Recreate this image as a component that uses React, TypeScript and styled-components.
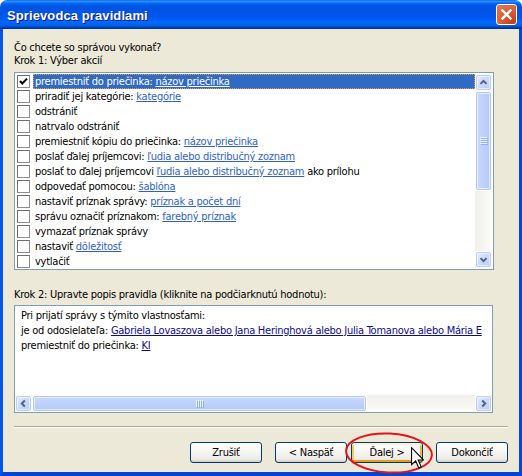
import React from "react";
import styled, {createGlobalStyle} from "styled-components";

const UI_FONT = `"DejaVu Sans Condensed", "Liberation Sans", sans-serif`

const GlobalStyle = createGlobalStyle`
  html, body {
    margin: 0;
    padding: 0;
    background: #ffffff;
  }
  body {
    font-family: ${UI_FONT};
    font-size: 11px;
    letter-spacing: -0.25px;
  }
`

type Part = { text: string, link?: boolean }
type Action = { parts: Part[], checked?: boolean, selected?: boolean }

const actions: Action[] = [
    {parts: [{text: "premiestniť do priečinka: "}, {text: "názov priečinka", link: true}], checked: true, selected: true},
    {parts: [{text: "priradiť jej kategórie: "}, {text: "kategórie", link: true}]},
    {parts: [{text: "odstrániť"}]},
    {parts: [{text: "natrvalo odstrániť"}]},
    {parts: [{text: "premiestniť kópiu do priečinka: "}, {text: "názov priečinka", link: true}]},
    {parts: [{text: "poslať ďalej príjemcovi: "}, {text: "ľudia alebo distribučný zoznam", link: true}]},
    {parts: [{text: "poslať to ďalej príjemcovi "}, {text: "ľudia alebo distribučný zoznam", link: true}, {text: " ako prílohu"}]},
    {parts: [{text: "odpovedať pomocou: "}, {text: "šablóna", link: true}]},
    {parts: [{text: "nastaviť príznak správy: "}, {text: "príznak a počet dní", link: true}]},
    {parts: [{text: "správu označiť príznakom: "}, {text: "farebný príznak", link: true}]},
    {parts: [{text: "vymazať príznak správy"}]},
    {parts: [{text: "nastaviť "}, {text: "dôležitosť", link: true}]},
    {parts: [{text: "vytlačiť"}]},
]

function Chevron(props: { dir: "up" | "down" | "left" | "right" }) {
    const pts = {
        up: "4,9 7.5,5.5 11,9",
        down: "4,6 7.5,9.5 11,6",
        left: "9,4 5.5,7.5 9,11",
        right: "6,4 9.5,7.5 6,11",
    }[props.dir]
    return (
        <svg width="13" height="13" viewBox="0 0 15 15">
            <polyline points={pts} fill="none" stroke="#4D6185" strokeWidth="2.2"/>
        </svg>
    )
}

function Grip(props: { vertical?: boolean }) {
    const lines = [0, 2, 4, 6]
    return props.vertical ? (
        <svg width="8" height="8" viewBox="0 0 8 8">
            {lines.map(y => (
                <g key={y}>
                    <line x1="0" y1={y + 0.5} x2="7" y2={y + 0.5} stroke="#EEF4FE"/>
                    <line x1="1" y1={y + 1.5} x2="8" y2={y + 1.5} stroke="#8CB0F8"/>
                </g>
            ))}
        </svg>
    ) : (
        <svg width="8" height="8" viewBox="0 0 8 8">
            {lines.map(x => (
                <g key={x}>
                    <line x1={x + 0.5} y1="0" x2={x + 0.5} y2="7" stroke="#EEF4FE"/>
                    <line x1={x + 1.5} y1="1" x2={x + 1.5} y2="8" stroke="#8CB0F8"/>
                </g>
            ))}
        </svg>
    )
}

export default function App(): JSX.Element {
    return (
        <>
            <GlobalStyle/>
            <Window>
                <TitleBar>
                    <Title>Sprievodca pravidlami</Title>
                    <CloseButton>
                        <svg width="13" height="13" viewBox="0 0 13 13">
                            <path d="M2.5 2.5 L10.5 10.5 M10.5 2.5 L2.5 10.5" stroke="#fff" strokeWidth="2.4" strokeLinecap="square"/>
                        </svg>
                    </CloseButton>
                </TitleBar>
                <Frame>
                    <Body>
                        <Label>Čo chcete so správou vykonať?</Label>
                        <Label $mb={5}>Krok 1: Výber akcií</Label>
                        <ListBox>
                            <Rows>
                                {actions.map((a, i) => (
                                    <Row key={i}>
                                        <CheckBox>
                                            {a.checked && (
                                                <svg width="11" height="11" viewBox="0 0 11 11">
                                                    <polyline points="2,5 4.3,7.5 9,2.6" fill="none" stroke="#000" strokeWidth="2"/>
                                                </svg>
                                            )}
                                        </CheckBox>
                                        <RowText $selected={a.selected}>
                                            {a.parts.map((p, j) => p.link
                                                ? <ListLink key={j} $selected={a.selected}>{p.text}</ListLink>
                                                : <span key={j}>{p.text}</span>)}
                                        </RowText>
                                    </Row>
                                ))}
                            </Rows>
                            <VScroll>
                                <ScrollButton><Chevron dir="up"/></ScrollButton>
                                <VThumb><Grip vertical/></VThumb>
                                <VTrack/>
                                <ScrollButton><Chevron dir="down"/></ScrollButton>
                            </VScroll>
                        </ListBox>
                        <Label $mt={18} $mb={3} $lh={14}>Krok 2: Upravte popis pravidla (kliknite na podčiarknutú hodnotu):</Label>
                        <DescBox>
                            <DescText>
                                <DescLine>Pri prijatí správy s týmito vlastnosťami:</DescLine>
                                <DescLine>je od odosielateľa: <DescLink>Gabriela Lovaszova alebo Jana Heringhová alebo Julia Tomanova alebo Mária E</DescLink></DescLine>
                                <DescLine>premiestniť do priečinka: <DescLink>KI</DescLink></DescLine>
                            </DescText>
                            <HScroll>
                                <ScrollButton><Chevron dir="left"/></ScrollButton>
                                <HThumb><Grip/></HThumb>
                                <HTrack/>
                                <ScrollButton><Chevron dir="right"/></ScrollButton>
                            </HScroll>
                        </DescBox>
                        <Separator/>
                        <ButtonRow>
                            <Button>Zrušiť</Button>
                            <Button $ml={13}>&lt; Naspäť</Button>
                            <HotSpot>
                                <Button $hot $ml={4}>Ďalej &gt;</Button>
                                <Ring width="92" height="46" viewBox="0 0 92 46">
                                    <ellipse cx="46" cy="22" rx="43" ry="19.5" fill="none" stroke="#E3141B" strokeWidth="2"
                                             transform="rotate(3 46 22)"/>
                                </Ring>
                                <Pointer width="13" height="22" viewBox="0 0 12 20">
                                    <path d="M0.5 0.5 L0.5 16.2 L4.3 12.6 L7.2 19.2 L9.4 18.2 L6.6 11.8 L11.4 11.8 Z"
                                          fill="#fff" stroke="#000" strokeWidth="1" strokeLinejoin="miter"/>
                                </Pointer>
                            </HotSpot>
                            <Button $ml={13}>Dokončiť</Button>
                        </ButtonRow>
                    </Body>
                </Frame>
            </Window>
        </>
    )
}

const Window = styled.div`
  width: 522px;
  height: 476px;
  display: flex;
  flex-direction: column;
`
const TitleBar = styled.div`
  height: 29px;
  flex: none;
  display: flex;
  align-items: center;
  justify-content: space-between;
  padding: 0 5px 0 7px;
  box-sizing: border-box;
  border-radius: 7px 7px 0 0;
  background: linear-gradient(to bottom, #0058EE 0%, #3593FF 4%, #288EFF 6%, #127DFF 8%, #036FFC 10%, #0262EE 14%, #0057E5 20%, #0054E3 24%, #0055EB 56%, #005BF5 66%, #026AFE 76%, #0062EF 86%, #0052D6 92%, #0040AB 94%, #003092 100%);
`
const Title = styled.div`
  font-family: "Liberation Sans", "DejaVu Sans", sans-serif;
  font-weight: bold;
  font-size: 13px;
  color: #ffffff;
  text-shadow: 1px 1px 0 #0A1883;
  letter-spacing: 0.1px;
  padding-top: 1px;
`
const CloseButton = styled.div`
  width: 21px;
  height: 21px;
  box-sizing: border-box;
  border: 1px solid #ffffff;
  border-radius: 3px;
  display: flex;
  align-items: center;
  justify-content: center;
  background: radial-gradient(circle at 80% 85%, #C73D1C 0%, #D9582F 40%, #E6805F 100%);
  box-shadow: inset 0 0 1px #8E2A0F;
`
const Frame = styled.div`
  flex: 1;
  display: flex;
  border-left: 3px solid #0555E6;
  border-right: 3px solid #0048D8;
  border-bottom: 4px solid #0344D2;
`
const Body = styled.div`
  flex: 1;
  background: #ECE9D8;
  display: flex;
  flex-direction: column;
  padding: 12px 11px 9px 11px;
  box-sizing: border-box;
`
const Label = styled.div<{ $mt?: number, $mb?: number, $lh?: number }>`
  color: #000;
  line-height: ${p => p.$lh ?? 13}px;
  height: ${p => p.$lh ?? 13}px;
  margin-top: ${p => p.$mt ?? 0}px;
  margin-bottom: ${p => p.$mb ?? 0}px;
  white-space: nowrap;
`
const ListBox = styled.div`
  width: 480px;
  height: 198px;
  box-sizing: border-box;
  border: 1px solid #7F9DB9;
  padding: 1px;
  background: #ffffff;
  display: flex;
`
const Rows = styled.div`
  flex: 1;
  display: flex;
  flex-direction: column;
  overflow: hidden;
`
const Row = styled.div`
  height: 15px;
  display: flex;
  align-items: center;
`
const CheckBox = styled.div`
  width: 13px;
  height: 13px;
  box-sizing: border-box;
  margin: 0 3px 0 1px;
  border: 1px solid #8C8C8C;
  border-top-color: #6F6F6F;
  border-left-color: #6F6F6F;
  background: #ffffff;
  display: flex;
  align-items: center;
  justify-content: center;
`
const RowText = styled.div<{ $selected?: boolean }>`
  flex: 1;
  height: 15px;
  line-height: 13px;
  box-sizing: border-box;
  padding-left: 1px;
  white-space: nowrap;
  color: ${p => p.$selected ? "#ffffff" : "#000000"};
  background: ${p => p.$selected ? "#316AC5" : "transparent"};
  border: 1px ${p => p.$selected ? "dotted #D9A24A" : "solid transparent"};
`
const ListLink = styled.span<{ $selected?: boolean }>`
  color: ${p => p.$selected ? "#ffffff" : "#2E62C9"};
  text-decoration: underline;
`
const VScroll = styled.div`
  width: 17px;
  display: flex;
  flex-direction: column;
  background: linear-gradient(to right, #F0EFE8, #FDFDFA);
`
const ScrollButton = styled.div`
  width: 15px;
  height: 15px;
  margin: 1px;
  flex: none;
  box-sizing: border-box;
  border: 1px solid #B9CDF6;
  border-radius: 2px;
  background: linear-gradient(135deg, #E4ECFE 0%, #CCDBFD 45%, #B8CCF8 100%);
  box-shadow: inset 0 0 0 1px rgba(255, 255, 255, .55), 0 0 0 1px #FFFFFF;
  display: flex;
  align-items: center;
  justify-content: center;
`
const VThumb = styled.div`
  height: 98px;
  margin: 1px;
  flex: none;
  box-sizing: border-box;
  border: 1px solid #B4C9F6;
  border-radius: 2px;
  background: linear-gradient(to right, #C9D8FC 0%, #BED1FB 50%, #B3C9F7 100%);
  box-shadow: inset 0 0 0 1px rgba(255, 255, 255, .6), 0 0 0 1px #FFFFFF;
  display: flex;
  align-items: center;
  justify-content: center;
`
const VTrack = styled.div`
  flex: 1;
`
const DescBox = styled.div`
  width: 479px;
  height: 108px;
  box-sizing: border-box;
  border: 1px solid #7F9DB9;
  background: #ffffff;
  display: flex;
  flex-direction: column;
`
const DescText = styled.div`
  flex: 1;
  overflow: hidden;
  padding: 2px 0 0 6px;
`
const DescLine = styled.div`
  height: 15px;
  line-height: 15px;
  white-space: nowrap;
  color: #000;
`
const DescLink = styled.span`
  color: #0B0B94;
  text-decoration: underline;
`
const HScroll = styled.div`
  height: 17px;
  flex: none;
  display: flex;
  background: linear-gradient(to bottom, #F0EFE8, #FDFDFA);
`
const HThumb = styled.div`
  width: 333px;
  margin: 1px;
  flex: none;
  box-sizing: border-box;
  border: 1px solid #B4C9F6;
  border-radius: 2px;
  background: linear-gradient(to bottom, #C9D8FC 0%, #BED1FB 50%, #B3C9F7 100%);
  box-shadow: inset 0 0 0 1px rgba(255, 255, 255, .6), 0 0 0 1px #FFFFFF;
  display: flex;
  align-items: center;
  justify-content: center;
`
const HTrack = styled.div`
  flex: 1;
`
const Separator = styled.div`
  margin-top: 13px;
  height: 1px;
  background: #ACA899;
  border-bottom: 1px solid #ffffff;
`
const ButtonRow = styled.div`
  margin-top: 14px;
  display: flex;
  justify-content: flex-end;
  align-items: center;
`
const Button = styled.button<{ $hot?: boolean, $ml?: number }>`
  width: 72px;
  height: 21px;
  margin-left: ${p => p.$ml ?? 0}px;
  padding: 0;
  box-sizing: border-box;
  border: 1px solid #003C74;
  border-radius: 3px;
  font-family: ${UI_FONT};
  font-size: 11px;
  letter-spacing: -0.25px;
  color: #000;
  background: linear-gradient(to bottom, #FFFFFF 0%, #F6F6F2 45%, #ECEBE6 85%, #D6D0C5 100%);
  box-shadow: ${p => p.$hot
          ? "inset 0 2px 0 #FFF0CF, inset 0 -2px 0 #E5A01A, inset 2px 0 0 #F8C864, inset -2px 0 0 #F3B23A"
          : "inset 0 -1px 0 #D6D0C5"};
`
const HotSpot = styled.div`
  position: relative;
  display: flex;
`
const Ring = styled.svg`
  position: absolute;
  left: -4px;
  top: -11px;
  pointer-events: none;
`
const Pointer = styled.svg`
  position: absolute;
  left: 64px;
  top: 5px;
  pointer-events: none;
`
